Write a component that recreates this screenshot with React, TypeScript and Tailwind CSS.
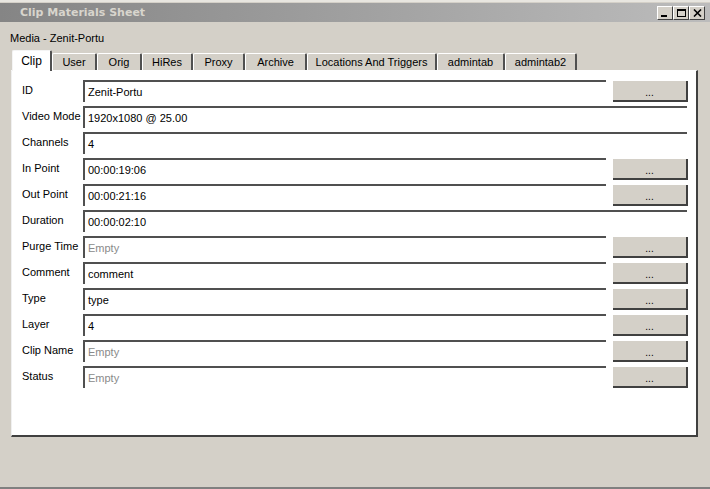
import React from "react"

const font = { fontFamily: '"Liberation Sans", Arial, sans-serif' }

const tabs = [
  { label: "User", w: "w-[45px]" },
  { label: "Orig", w: "w-[45px]" },
  { label: "HiRes", w: "w-[51px]" },
  { label: "Proxy", w: "w-[52px]" },
  { label: "Archive", w: "w-[62px]" },
  { label: "Locations And Triggers", w: "w-[130px]" },
  { label: "admintab", w: "w-[68px]" },
  { label: "admintab2", w: "w-[72px]" },
]

const rows = [
  { label: "ID", value: "Zenit-Portu", btn: true },
  { label: "Video Mode", value: "1920x1080 @ 25.00", btn: false },
  { label: "Channels", value: "4", btn: false },
  { label: "In Point", value: "00:00:19:06", btn: true },
  { label: "Out Point", value: "00:00:21:16", btn: true },
  { label: "Duration", value: "00:00:02:10", btn: false },
  { label: "Purge Time", value: "", btn: true },
  { label: "Comment", value: "comment", btn: true },
  { label: "Type", value: "type", btn: true },
  { label: "Layer", value: "4", btn: true },
  { label: "Clip Name", value: "", btn: true },
  { label: "Status", value: "", btn: true },
]

function WinButton({ children }: { children: React.ReactNode }) {
  return (
    <div className="w-[16px] h-[14px] bg-[#d4d0c8] border-t border-l border-t-white border-l-white border-r border-b border-r-[#404040] border-b-[#404040] flex items-center justify-center">
      {children}
    </div>
  )
}

export default function App() {
  return (
    <div className="w-[710px] h-[489px] bg-[#d4d0c8] flex flex-col overflow-hidden text-[11px] text-black" style={font}>
      {/* Title bar */}
      <div className="border-t-2 border-t-[#e8e6e0] bg-[#d4d0c8] pt-[1px]">
        <div className="h-[19px] bg-gradient-to-r from-[#858585] to-[#bcbcbc] flex items-center pl-[20px] pr-[5px]">
          <span className="font-bold text-[11px] text-[#d8d5cd] pt-[1px]" style={{ fontFamily: '"DejaVu Sans", sans-serif' }}>
            Clip Materials Sheet
          </span>
          <div className="ml-auto flex">
            <WinButton>
              <div className="w-[6px] h-[2px] bg-black mt-[6px] -ml-[2px]" />
            </WinButton>
            <WinButton>
              <div className="w-[9px] h-[8px] border border-black border-t-2" />
            </WinButton>
            <WinButton>
              <svg width="9" height="8" viewBox="0 0 9 8">
                <path d="M1 0.5 L8 7.5 M8 0.5 L1 7.5" stroke="black" strokeWidth="1.6" />
              </svg>
            </WinButton>
          </div>
        </div>
      </div>

      {/* Media label */}
      <div className="h-[28px] flex items-center pl-[10px] pt-[4px]">Media - Zenit-Portu</div>

      {/* Tabs */}
      <div className="flex items-end h-[20px] pl-[12px] relative z-10">
        <div className="w-[40px] h-[21px] -mb-[1px] bg-white border-t border-l border-t-[#f4f4f4] border-l-[#f4f4f4] border-r-2 border-r-[#505050] rounded-t-[2px] flex items-center justify-center text-[12px] pb-[1px]">
          Clip
        </div>
        {tabs.map((t) => (
          <div
            key={t.label}
            className={`${t.w} h-[17px] bg-[#d4d0c8] border-t border-l border-t-white border-l-white border-r-2 border-r-[#505050] rounded-t-[2px] flex items-center justify-center`}
          >
            {t.label}
          </div>
        ))}
      </div>

      {/* Panel */}
      <div className="ml-[11px] w-[687px] h-[367px] bg-white border-t border-l border-t-white border-l-[#f0f0f0] border-r-2 border-b-2 border-r-[#404040] border-b-[#404040] pt-[9px] pl-[10px] pr-[7px] flex flex-col gap-[4px]">
        {rows.map((r) => (
          <div key={r.label} className="flex items-center h-[22px]">
            <div className="w-[61px] shrink-0 -mt-[1px]">{r.label}</div>
            <div
              className={`${r.btn ? "w-[523px]" : "w-[604px]"} h-[22px] border-t-2 border-l-2 border-t-[#505050] border-l-[#505050] flex items-center pl-[3px] ${r.value ? "text-black" : "text-[#8a8a8a]"}`}
            >
              {r.value || "Empty"}
            </div>
            {r.btn && (
              <div className="ml-[7px] w-[75px] h-[21px] bg-[#d4d0c8] border-r-2 border-b-2 border-r-[#404040] border-b-[#404040] flex items-end justify-center pb-[2px] text-[10px] leading-none">
                ...
              </div>
            )}
          </div>
        ))}
      </div>

      <div className="flex-1" />
      <div className="h-[2px] bg-[#808080]" />
    </div>
  )
}
